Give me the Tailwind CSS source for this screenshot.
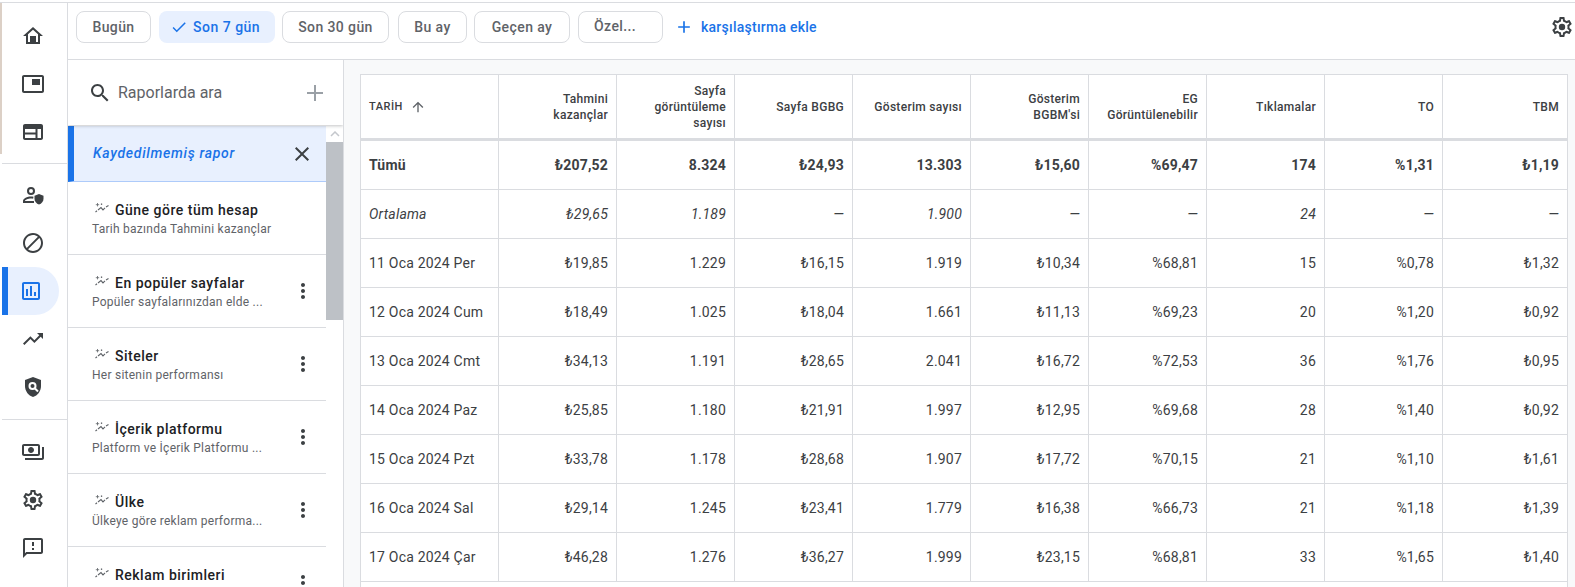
<!DOCTYPE html>
<html lang="tr">

<head>
    <meta charset="UTF-8">
    <title>Raporlar</title>
    <script src="https://cdn.jsdelivr.net/npm/@tailwindcss/browser@4"></script>
</head>

<body class="bg-white font-['Roboto',sans-serif] overflow-hidden">
    <div class="relative w-[1575px] h-[585px] overflow-hidden flex border-t border-[#dadce0] mt-[2px]">
        <!-- beige sliver at the window edge -->
        <div class="absolute left-0 top-0 w-[2px] h-[151px] bg-[#dcd0c6]"></div>

        <!-- Left rail -->
        <nav class="w-[68px] shrink-0 h-full border-r border-[#dadce0] flex flex-col text-[#3c4043]">
            <div class="h-[9px]"></div>
            <a class="h-[48px] flex items-center justify-center pr-[1px]"><svg width="24" height="24" viewBox="0 0 24 24" fill="currentColor"><path d="M12 5.69l5 4.5V18h-2v-6H9v6H7v-7.81l5-4.5M12 3L2 12h3v8h14v-8h3L12 3z"/><rect x="9" y="12" width="6" height="6"/></svg></a>
            <a class="h-[48px] flex items-center justify-center pr-[1px]"><svg width="24" height="24" viewBox="0 0 24 24" fill="currentColor"><path d="M19 7h-8v6h8V7zm2-4H3c-1.1 0-2 .9-2 2v14c0 1.1.9 1.98 2 1.98h18c1.1 0 2-.88 2-1.98V5c0-1.1-.9-2-2-2zm0 16.01H3V4.98h18v14.03z"/></svg></a>
            <a class="h-[48px] flex items-center justify-center pr-[1px]"><svg width="24" height="24" viewBox="0 0 24 24" fill="currentColor"><path d="M20 4H4c-1.1 0-2 .9-2 2v12c0 1.1.9 2 2 2h16c1.1 0 2-.9 2-2V6c0-1.1-.9-2-2-2zM4 9h10.5v3.5H4V9zm0 5.5h10.5V18H4v-3.5zM20 18h-3.5V9H20v9z"/></svg></a>
            <div class="h-[7px]"></div>
            <div class="ml-[2px] h-px bg-[#dadce0]"></div>
            <div class="h-[7px]"></div>
            <a class="h-[48px] flex items-center justify-center pr-[1px]"><svg width="24" height="24" viewBox="0 0 24 24" fill="currentColor"><path d="M10 12a4 4 0 1 0 0-8 4 4 0 0 0 0 8zm0-6a2 2 0 1 1 0 4 2 2 0 0 1 0-4zM4 18c.2-1.2 3-2.5 6-2.5.7 0 1.5.1 2.1.2l.4-1.9c-.8-.2-1.7-.3-2.5-.3-3.7 0-8 1.800-8 4.500v2h11v-2H4z"/><path d="M18 11l-4.500 1.700v3.100c0 2.600 1.900 5 4.500 5.700 2.600-.7 4.500-3.100 4.500-5.700v-3.100L18 11z"/></svg></a>
            <a class="h-[48px] flex items-center justify-center pr-[1px]"><svg width="24" height="24" viewBox="0 0 24 24" fill="currentColor"><path d="M12 2C6.48 2 2 6.48 2 12s4.480 10 10 10 10-4.480 10-10S17.520 2 12 2zM4 12c0-4.420 3.580-8 8-8 1.850 0 3.550.63 4.900 1.690L5.690 16.900C4.630 15.550 4 13.850 4 12zm8 8c-1.850 0-3.550-.63-4.900-1.690L18.310 7.100C19.370 8.450 20 10.150 20 12c0 4.420-3.580 8-8 8z"/></svg></a>
            <a class="relative ml-[2px] mr-[8px] h-[48px] flex items-center justify-center bg-[#e8f0fe] rounded-r-[24px] border-l-[6px] border-[#1a73e8] text-[#1a73e8] pr-[5px]"><svg width="24" height="24" viewBox="0 0 24 24" fill="currentColor"><path d="M19 3H5c-1.100 0-2 .9-2 2v14c0 1.100.9 2 2 2h14c1.100 0 2-.9 2-2V5c0-1.100-.9-2-2-2zm0 16H5V5h14v14zM7 10h2v7H7zm4-3h2v10h-2zm4 6h2v4h-2z"/></svg></a>
            <a class="h-[48px] flex items-center justify-center pr-[1px]"><svg width="24" height="24" viewBox="0 0 24 24" fill="currentColor"><path d="M16 6l2.290 2.290-4.880 4.880-4-4L2 16.590 3.410 18l6-6 4 4 6.300-6.290L22 12V6z"/></svg></a>
            <a class="h-[48px] flex items-center justify-center pr-[1px]"><svg width="24" height="24" viewBox="0 0 24 24"><path fill="currentColor" d="M12 2L4 5v6.090c0 5.050 3.410 9.760 8 10.910 4.590-1.150 8-5.860 8-10.910V5l-8-3z"/><circle cx="11.500" cy="11" r="4" fill="white"/><circle cx="11.500" cy="11" r="2" fill="currentColor"/><path d="M14 13.500l3 3" stroke="white" stroke-width="2"/></svg></a>
            <div class="h-[8px]"></div>
            <div class="ml-[2px] h-px bg-[#dadce0]"></div>
            <div class="h-[8px]"></div>
            <a class="h-[48px] flex items-center justify-center pr-[1px]"><svg width="24" height="24" viewBox="0 0 24 24" fill="currentColor"><path d="M19 14V6c0-1.100-.9-2-2-2H3c-1.100 0-2 .9-2 2v8c0 1.100.9 2 2 2h14c1.100 0 2-.9 2-2zm-2 0H3V6h14v8zm-7-7c-1.660 0-3 1.340-3 3s1.340 3 3 3 3-1.340 3-3-1.340-3-3-3zm13 0v11c0 1.100-.9 2-2 2H4v-2h17V7h2z"/></svg></a>
            <a class="h-[48px] flex items-center justify-center pr-[1px]"><svg width="24" height="24" viewBox="0 0 24 24" fill="currentColor"><path d="M19.430 12.980c.04-.32.07-.64.07-.98 0-.34-.03-.66-.07-.98l2.110-1.650c.19-.15.24-.42.12-.64l-2-3.460c-.09-.16-.26-.25-.44-.25-.06 0-.12.01-.17.03l-2.490 1c-.52-.4-1.080-.73-1.690-.98l-.38-2.650C14.460 2.180 14.250 2 14 2h-4c-.25 0-.46.18-.49.42l-.38 2.650c-.61.25-1.170.59-1.690.98l-2.490-1c-.06-.02-.12-.03-.18-.03-.17 0-.34.09-.43.25l-2 3.460c-.13.22-.07.49.12.64l2.110 1.650c-.04.32-.07.65-.07.98 0 .33.03.66.07.98l-2.110 1.650c-.19.15-.24.42-.12.64l2 3.460c.09.16.26.25.44.25.06 0 .12-.01.17-.03l2.490-1c.52.4 1.080.73 1.690.98l.38 2.650c.03.24.24.42.49.42h4c.25 0 .46-.18.49-.42l.38-2.650c.61-.25 1.170-.59 1.690-.98l2.490 1c.06.02.12.03.18.03.17 0 .34-.09.43-.25l2-3.460c.12-.22.07-.49-.12-.64l-2.110-1.650zm-1.980-1.710c.04.31.05.52.05.73 0 .21-.02.43-.05.73l-.14 1.130.89.7 1.080.84-.7 1.210-1.270-.51-1.040-.42-.9.68c-.43.32-.84.56-1.250.73l-1.060.43-.16 1.130-.2 1.350h-1.400l-.19-1.350-.16-1.130-1.060-.43c-.43-.18-.83-.41-1.230-.71l-.91-.7-1.060.43-1.270.51-.7-1.210 1.080-.84.89-.7-.14-1.130c-.03-.31-.05-.54-.05-.74s.02-.43.05-.73l.14-1.130-.89-.7-1.080-.84.7-1.210 1.270.51 1.040.42.9-.68c.43-.32.84-.56 1.250-.73l1.060-.43.16-1.130.2-1.350h1.390l.19 1.350.16 1.130 1.060.43c.43.18.83.41 1.230.71l.91.7 1.060-.43 1.270-.51.7 1.210-1.070.85-.89.7.14 1.130z"/><circle cx="12" cy="12" r="3.200"/></svg></a>
            <a class="h-[48px] flex items-center justify-center pr-[1px]"><svg width="24" height="24" viewBox="0 0 24 24" fill="currentColor"><path d="M20 2H4c-1.100 0-1.990.9-1.990 2L2 22l4-4h14c1.100 0 2-.9 2-2V4c0-1.100-.9-2-2-2zm0 14H5.170L4 17.170V4h16v12zm-9-4h2v2h-2zm0-6h2v4h-2z"/></svg></a>
        </nav>

        <div class="flex-1 min-w-0 flex flex-col">
            <!-- Toolbar -->
            <header class="h-[57px] shrink-0 border-b border-[#dadce0] pl-[8px] pr-[1px] pt-[8px] flex items-start text-[14px] font-medium tracking-[0.25px] text-[#5f6368]">
                <button class="w-[75px] h-[32px] border border-[#dadce0] rounded-[8px] tracking-[0.4px]">Bugün</button>
                <button class="ml-[8px] w-[116px] h-[32px] bg-[#e8f0fe] text-[#1a73e8] rounded-[8px] flex items-center pl-[11px] gap-[5px] tracking-[0.5px]">
                    <svg width="18" height="18" viewBox="0 0 24 24" fill="currentColor"><path d="M9 16.170L4.830 12l-1.420 1.410L9 19 21 7l-1.410-1.410z"/></svg>
                    Son 7 gün
                </button>
                <button class="ml-[7px] w-[107px] h-[32px] border border-[#dadce0] rounded-[8px] tracking-[0.4px]">Son 30 gün</button>
                <button class="ml-[9px] w-[69px] h-[32px] border border-[#dadce0] rounded-[8px] tracking-[0.4px]">Bu ay</button>
                <button class="ml-[7px] w-[96px] h-[32px] border border-[#dadce0] rounded-[8px] tracking-[0.4px]">Geçen ay</button>
                <button class="ml-[8px] w-[85px] h-[32px] border border-[#dadce0] rounded-[8px] text-left pl-[15px] pb-[2px] tracking-[0.4px]">Özel...</button>
                <button class="ml-[11px] h-[32px] flex items-center text-[#1a73e8] gap-[7px]">
                    <svg width="20" height="20" viewBox="0 0 24 24" fill="currentColor"><path d="M19 13h-6v6h-2v-6H5v-2h6V5h2v6h6v2z"/></svg>
                    karşılaştırma ekle
                </button>
                <svg class="ml-auto mt-[4px] text-[#3c4043]" width="24" height="24" viewBox="0 0 24 24" fill="currentColor"><path d="M19.430 12.980c.04-.32.07-.64.07-.98 0-.34-.03-.66-.07-.98l2.110-1.650c.19-.15.24-.42.12-.64l-2-3.460c-.09-.16-.26-.25-.44-.25-.06 0-.12.01-.17.03l-2.490 1c-.52-.4-1.080-.73-1.690-.98l-.38-2.650C14.460 2.180 14.250 2 14 2h-4c-.25 0-.46.18-.49.42l-.38 2.650c-.61.25-1.170.59-1.690.98l-2.490-1c-.06-.02-.12-.03-.18-.03-.17 0-.34.09-.43.25l-2 3.460c-.13.22-.07.49.12.64l2.110 1.650c-.04.32-.07.65-.07.98 0 .33.03.66.07.98l-2.110 1.650c-.19.15-.24.42-.12.64l2 3.460c.09.16.26.25.44.25.06 0 .12-.01.17-.03l2.490-1c.52.4 1.080.73 1.690.98l.38 2.650c.03.24.24.42.49.42h4c.25 0 .46-.18.49-.42l.38-2.650c.61-.25 1.170-.59 1.690-.98l2.490 1c.06.02.12.03.18.03.17 0 .34-.09.43-.25l2-3.460c.12-.22.07-.49-.12-.64l-2.110-1.650zm-1.980-1.710c.04.31.05.52.05.73 0 .21-.02.43-.05.73l-.14 1.130.89.7 1.080.84-.7 1.210-1.270-.51-1.040-.42-.9.68c-.43.32-.84.56-1.250.73l-1.060.43-.16 1.130-.2 1.350h-1.400l-.19-1.350-.16-1.130-1.060-.43c-.43-.18-.83-.41-1.230-.71l-.91-.7-1.060.43-1.270.51-.7-1.210 1.080-.84.89-.7-.14-1.130c-.03-.31-.05-.54-.05-.74s.02-.43.05-.73l.14-1.130-.89-.7-1.080-.84.7-1.210 1.270.51 1.040.42.9-.68c.43-.32.84-.56 1.250-.73l1.060-.43.16-1.130.2-1.350h1.390l.19 1.350.16 1.130 1.060.43c.43.18.83.41 1.230.71l.91.7 1.060-.43 1.270-.51.7 1.210-1.070.85-.89.7.14 1.130z"/><circle cx="12" cy="12" r="3.200"/></svg>
            </header>

            <div class="flex-1 min-h-0 flex">
                <!-- Report list -->
                <aside class="w-[276px] shrink-0 border-r border-[#dadce0] flex flex-col overflow-hidden">
                    <div class="relative z-10 h-[65px] shrink-0 flex items-center pl-[20px] shadow-[0_1px_3px_rgba(60,64,67,0.3)]">
                        <svg width="24" height="24" viewBox="0 0 24 24" fill="#3c4043"><path d="M15.500 14h-.79l-.28-.27C15.410 12.590 16 11.110 16 9.500 16 5.910 13.090 3 9.500 3S3 5.910 3 9.500 5.910 16 9.500 16c1.610 0 3.090-.59 4.230-1.570l.27.28v.79l5 4.990L20.490 19l-4.990-5zm-6 0C7.010 14 5 11.990 5 9.500S7.010 5 9.500 5 14 7.010 14 9.500 11.990 14 9.500 14z"/></svg>
                        <span class="ml-[6px] text-[16px] text-[#5f6368]">Raporlarda ara</span>
                        <svg class="ml-auto mr-[16px]" width="24" height="24" viewBox="0 0 24 24" fill="#9aa0a6"><path d="M20 13h-7v7h-2v-7H4v-2h7V4h2v7h7v2z"/></svg>
                    </div>
                    <div class="flex-1 min-h-0 flex pt-[1px]">
                        <ul id="reports" class="w-[258px] shrink-0">
                            <li class="h-[56px] flex items-center bg-[#e8f0fe] border-l-[6px] border-b border-l-[#1a73e8] border-b-[#aecbfa] pl-[19px] pr-[12px]">
                                <span class="italic font-medium text-[14px] tracking-[0.7px] text-[#1a73e8]">Kaydedilmemiş rapor</span>
                                <svg class="ml-auto" width="24" height="24" viewBox="0 0 24 24" fill="#3c4043"><path d="M19 6.410L17.590 5 12 10.590 6.410 5 5 6.410 10.590 12 5 17.590 6.410 19 12 13.410 17.590 19 19 17.590 13.410 12z"/></svg>
                            </li>
                        </ul>
                        <div class="flex-1 flex flex-col">
                            <div class="h-[16px] flex items-center justify-center"><svg width="10" height="6" viewBox="0 0 10 6" fill="none" stroke="#c4c7cc" stroke-width="1.500"><path d="M1 5l4-4 4 4"/></svg></div>
                            <div class="h-[178px] bg-[#bdc1c6]"></div>
                        </div>
                    </div>
                </aside>

                <!-- Table -->
                <main class="flex-1 min-w-0 bg-[#f8f9fa] pl-[16px] pr-[7px] pt-[14px]">
                    <div id="table" class="bg-white border-l border-r border-t border-[#dadce0] text-[#3c4043] h-full"></div>
                </main>
            </div>
        </div>
    </div>

    <script>
        const reports = [
            ['Güne göre tüm hesap', 'Tarih bazında Tahmini kazançlar', false],
            ['En popüler sayfalar', 'Popüler sayfalarınızdan elde ...', true],
            ['Siteler', 'Her sitenin performansı', true],
            ['İçerik platformu', 'Platform ve İçerik Platformu ...', true],
            ['Ülke', 'Ülkeye göre reklam performa...', true],
            ['Reklam birimleri', '', true]
        ];
        const more = '<svg class="absolute right-[11px] top-[24px]" width="24" height="24" viewBox="0 0 24 24" fill="#3c4043"><path d="M12 8c1.100 0 2-.9 2-2s-.9-2-2-2-2 .9-2 2 .9 2 2 2zm0 2c-1.100 0-2 .9-2 2s.9 2 2 2 2-.9 2-2-.9-2-2-2zm0 6c-1.100 0-2 .9-2 2s.9 2 2 2 2-.9 2-2-.9-2-2-2z"/></svg>';
        const spark = '<svg class="-mt-[3px]" width="18" height="14" viewBox="0 0 18 14" fill="none" stroke="#5f6368"><path d="M3.500 10l1.500-1.200M6 8l3-2.400 2 2.300 2-2M14 5l2.500-1.500" stroke-width="1.100"/><path d="M5.500 1v3.400M3.800 2.700h3.400M9.500 1.500v1.500M8.800 2.200h1.500" stroke-width=".8"/></svg>';
        const list = document.getElementById('reports');
        reports.forEach(r => {
            const li = document.createElement('li');
            li.className = 'relative h-[73px] border-b border-[#dadce0] pl-[24px] pt-[18px]';
            li.innerHTML = `<div class="flex items-center gap-[5px] h-[20px]">${spark}<span class="text-[14px] font-medium tracking-[0.5px] text-[#202124]">${r[0]}</span></div>
                <div class="text-[12px] leading-[16px] tracking-[0.25px] text-[#5f6368] mt-[1px]">${r[1]}</div>${r[2] ? more : ''}`;
            list.appendChild(li);
        });

        const head = [
            'Tahmini<br>kazançlar', 'Sayfa<br>görüntüleme<br>sayısı', 'Sayfa BGBG', 'Gösterim sayısı',
            'Gösterim<br>BGBM\'si', 'EG<br>Görüntülenebilir', 'Tıklamalar', 'TO', 'TBM'
        ];
        const rows = [
            ['Tümü', '₺207,52', '8.324', '₺24,93', '13.303', '₺15,60', '%69,47', '174', '%1,31', '₺1,19'],
            ['Ortalama', '₺29,65', '1.189', '—', '1.900', '—', '—', '24', '—', '—'],
            ['11 Oca 2024 Per', '₺19,85', '1.229', '₺16,15', '1.919', '₺10,34', '%68,81', '15', '%0,78', '₺1,32'],
            ['12 Oca 2024 Cum', '₺18,49', '1.025', '₺18,04', '1.661', '₺11,13', '%69,23', '20', '%1,20', '₺0,92'],
            ['13 Oca 2024 Cmt', '₺34,13', '1.191', '₺28,65', '2.041', '₺16,72', '%72,53', '36', '%1,76', '₺0,95'],
            ['14 Oca 2024 Paz', '₺25,85', '1.180', '₺21,91', '1.997', '₺12,95', '%69,68', '28', '%1,40', '₺0,92'],
            ['15 Oca 2024 Pzt', '₺33,78', '1.178', '₺28,68', '1.907', '₺17,72', '%70,15', '21', '%1,10', '₺1,61'],
            ['16 Oca 2024 Sal', '₺29,14', '1.245', '₺23,41', '1.779', '₺16,38', '%66,73', '21', '%1,18', '₺1,39'],
            ['17 Oca 2024 Çar', '₺46,28', '1.276', '₺36,27', '1.999', '₺23,15', '%68,81', '33', '%1,65', '₺1,40']
        ];
        const grid = 'grid grid-cols-[137px_repeat(8,118px)_1fr]';
        const table = document.getElementById('table');
        let html = `<div class="${grid} h-[66px] border-b-[3px] border-[#dadce0] text-[12px] leading-[16px] font-medium tracking-[0.3px]">
            <div class="flex items-center pl-[8px] text-[11px] tracking-[0.5px] gap-[6px]">TARİH
                <svg class="ml-[1px]" width="16" height="16" viewBox="0 0 24 24" fill="#5f6368"><path d="M4 12l1.410 1.410L11 7.830V20h2V7.830l5.580 5.590L20 12l-8-8-8 8z"/></svg></div>`;
        head.forEach(h => {
            html += `<div class="flex items-center justify-end text-right pr-[8px] border-l border-[#dadce0]">${h}</div>`;
        });
        html += '</div>';
        rows.forEach((r, i) => {
            const style = i === 0 ? 'font-bold' : i === 1 ? 'italic' : '';
            html += `<div class="${grid} h-[49px] border-b border-[#dadce0] text-[14px] tracking-[0.2px] ${style}">`;
            r.forEach((c, j) => {
                html += j === 0
                    ? `<div class="flex items-center pl-[8px]">${c}</div>`
                    : `<div class="flex items-center justify-end pr-[8px] border-l border-[#dadce0]">${c}</div>`;
            });
            html += '</div>';
        });
        table.innerHTML = html;
    </script>
</body>

</html>
